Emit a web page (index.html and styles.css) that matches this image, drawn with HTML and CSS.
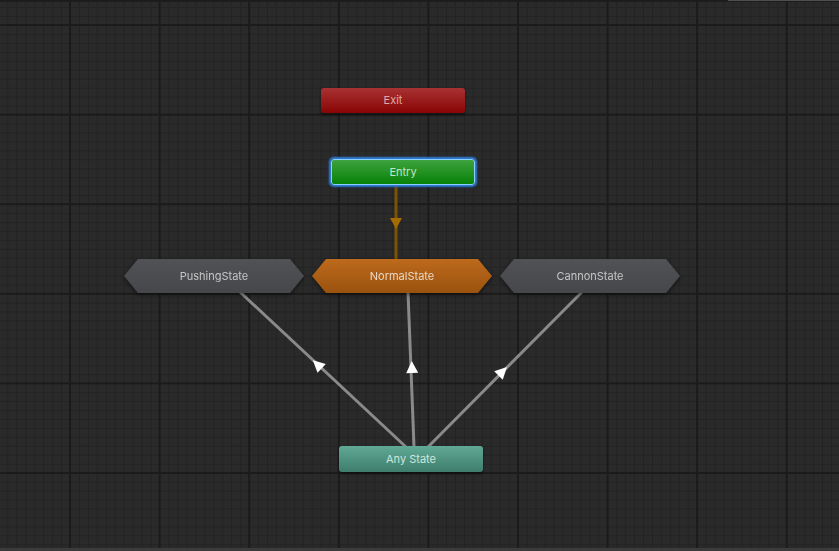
FILE: index.html
```html
<!DOCTYPE html>
<html>
<head>
<meta charset="utf-8">
<link rel="stylesheet" href="styles.css">
</head>
<body>
<div class="window">
  <div class="topbar"><div class="topbar-light"></div></div>
  <div class="canvas">
    <svg class="wires" width="839" height="551" viewBox="0 0 839 551">
      <line x1="396" y1="186" x2="396" y2="260" stroke="#7d5200" stroke-width="3"/>
      <polygon points="390,218 402,218 396,229" fill="#a36c00"/>
      <line x1="240" y1="292" x2="406" y2="447" stroke="#8a8a8a" stroke-width="3"/>
      <line x1="408" y1="292" x2="414" y2="447" stroke="#8a8a8a" stroke-width="3"/>
      <line x1="582" y1="292" x2="428" y2="447" stroke="#8a8a8a" stroke-width="3"/>
      <polygon points="0,-7 6,5 -6,5" fill="#ffffff" transform="translate(318 365) rotate(-47)"/>
      <polygon points="0,-7 6,5 -6,5" fill="#ffffff" transform="translate(412 368) rotate(-2)"/>
      <polygon points="0,-7 6,5 -6,5" fill="#ffffff" transform="translate(502 372) rotate(45)"/>
    </svg>
    <div class="node rect exit">Exit</div>
    <div class="node rect entry">Entry</div>
    <div class="hexwrap pushing"><div class="hex grey">PushingState</div></div>
    <div class="hexwrap normal"><div class="hex orange">NormalState</div></div>
    <div class="hexwrap cannon"><div class="hex grey">CannonState</div></div>
    <div class="node rect any">Any State</div>
  </div>
  <div class="bottombar"></div>
</div>
</body>
</html>
```
FILE: styles.css
```css
html, body {
  margin: 0;
  padding: 0;
  background: #282828;
}
.window {
  width: 839px;
  height: 551px;
  overflow: hidden;
  display: flex;
  flex-direction: column;
  font-family: Inter, "Noto Sans", sans-serif;
}
.topbar {
  height: 2px;
  background: #1c1c1c;
  display: flex;
  justify-content: flex-end;
  flex: none;
}
.topbar-light {
  width: 111px;
  height: 1px;
  background: #4e4e4e;
}
.canvas {
  position: relative;
  flex: 1;
  background-color: #2a2a2a;
  background-image:
    linear-gradient(to right, #1b1b1b 2px, transparent 2px),
    linear-gradient(to bottom, #1b1b1b 2px, transparent 2px),
    linear-gradient(to right, #232323 1px, transparent 1px),
    linear-gradient(to bottom, #232323 1px, transparent 1px);
  background-size: 89.6px 100%, 100% 89.6px, 8.96px 100%, 100% 8.96px;
  background-position: 69px 0, 0 22px, 70px 0, 0 23px;
}
.bottombar {
  height: 3px;
  background: #3b3b3b;
  flex: none;
}
.wires {
  position: absolute;
  left: 0;
  top: -2px;
}
.node, .hexwrap {
  position: absolute;
  display: flex;
  align-items: center;
  justify-content: center;
  font-size: 11px;
  line-height: 1;
}
.rect {
  width: 144px;
  height: 25px;
  border-radius: 3px;
  box-shadow: 0 2px 3px rgba(0, 0, 0, 0.45);
  box-sizing: border-box;
}
.exit {
  left: 321px;
  top: 86px;
  background: linear-gradient(to bottom, #a83232, #8a0404);
  color: #deaaaa;
}
.entry {
  left: 331px;
  top: 157px;
  height: 26px;
  background: linear-gradient(to bottom, #3ea33e, #078107);
  color: #c6e4c6;
  border: 1px solid #8cd0ff;
  box-shadow: 0 0 2px 2px #2f7fd8, 0 2px 3px rgba(0, 0, 0, 0.5);
}
.any {
  left: 339px;
  top: 444px;
  height: 26px;
  background: linear-gradient(to bottom, #60a994, #3e7d6c);
  color: #cde6de;
}
.hexwrap {
  top: 257px;
  width: 180px;
  height: 34px;
  filter: drop-shadow(0 2px 2px rgba(0, 0, 0, 0.45));
}
.pushing { left: 124px; }
.normal { left: 312px; }
.cannon { left: 500px; }
.hex {
  width: 100%;
  height: 100%;
  display: flex;
  align-items: center;
  justify-content: center;
  clip-path: polygon(14px 0, calc(100% - 14px) 0, 100% 50%, calc(100% - 14px) 100%, 14px 100%, 0 50%);
}
.grey {
  background: linear-gradient(to bottom, #505256, #45474b);
  color: #c6c6c6;
}
.orange {
  background: linear-gradient(to bottom, #bd6a1c, #9a520e);
  color: #e8d8c6;
}
```
